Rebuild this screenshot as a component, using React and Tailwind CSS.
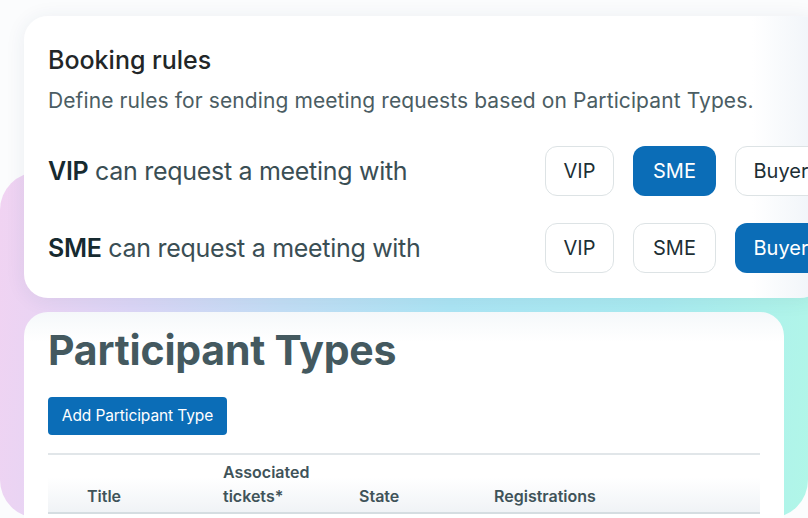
export default function App() {
  const rows = [
    { who: "VIP", picked: "SME" },
    { who: "SME", picked: "Buyer" },
  ];
  const options = [
    { label: "VIP", w: "w-[69px]" },
    { label: "SME", w: "w-[83px]" },
    { label: "Buyer", w: "w-[92px]" },
  ];

  return (
    <div
      className="relative w-[808px] h-[518px] overflow-hidden bg-[#fbfcfd]"
      style={{ fontFamily: "Inter, 'Noto Sans', sans-serif" }}
    >
      {/* backdrop blob behind the cards */}
      <div className="absolute left-0 top-[172px] w-[808px] h-[346px] rounded-[38px] bg-[linear-gradient(95deg,#f1d3f2_0%,#dcd6f6_17%,#c3def5_35%,#ace5f4_55%,#a9ebf0_80%,#b1f6e8_100%)]" />

      <div className="relative flex flex-col pt-4 pl-6">
        <section className="w-[800px] h-[282px] shrink-0 rounded-[24px] bg-[linear-gradient(90deg,#ffffff_91%,#eef3f8)] shadow-[0_2px_20px_rgba(40,70,100,0.08)] pl-6 pt-[28px]">
          <h2 className="text-[25px] leading-8 font-medium text-[#222628]">
            Booking rules
          </h2>
          <p className="mt-[11px] text-[21px] leading-7 text-[#4b5d63] tracking-[0.1px]">
            Define rules for sending meeting requests based on Participant Types.
          </p>

          <div className="mt-[31px] flex flex-col gap-[27px]">
            {rows.map((r) => (
              <div key={r.who} className="flex items-center">
                <div className="w-[497px] shrink-0 text-[25px] leading-8 text-[#3a4e54] tracking-[-0.3px]">
                  <span className="font-semibold text-[#162a30]">{r.who}</span>{" "}
                  can request a meeting with
                </div>
                <div className="flex gap-[19px]">
                  {options.map((o) => (
                    <button
                      key={o.label}
                      type="button"
                      className={
                        o.w +
                        " h-[50px] shrink-0 rounded-[12px] text-[20px] " +
                        (o.label === r.picked
                          ? "bg-[#0b6db7] text-white"
                          : "bg-white text-[#1d2f35] border-[1.5px] border-[#dde3e5]")
                      }
                    >
                      {o.label}
                    </button>
                  ))}
                </div>
              </div>
            ))}
          </div>
        </section>

        <section className="mt-[14px] w-[760px] h-[230px] shrink-0 rounded-[24px] bg-[linear-gradient(180deg,#f5f8fa_0px,#ffffff_30px)] px-6 pt-[14px]">
          <h1 className="text-[41px] leading-[48px] font-bold text-[#44595f] tracking-[-0.2px]">
            Participant Types
          </h1>
          <button
            type="button"
            className="mt-[23px] w-[179px] h-[38px] rounded-[4px] bg-[#0b6db7] text-white text-[15.5px] tracking-[-0.1px]"
          >
            Add Participant Type
          </button>

          <div className="mt-[18px] border-t-[2px] border-[#e1e6e9] border-b-[2px] border-b-[#d5dde1] bg-[linear-gradient(180deg,#ffffff_40%,#f0f3f6)] grid grid-cols-[175px_136px_135px_1fr] items-end pb-[4px] pt-[5px] text-[16px] leading-6 font-semibold text-[#3f5359]">
            <div className="pl-[39px]">Title</div>
            <div>
              Associated
              <br />
              tickets*
            </div>
            <div>State</div>
            <div>Registrations</div>
          </div>
        </section>
      </div>
    </div>
  );
}
